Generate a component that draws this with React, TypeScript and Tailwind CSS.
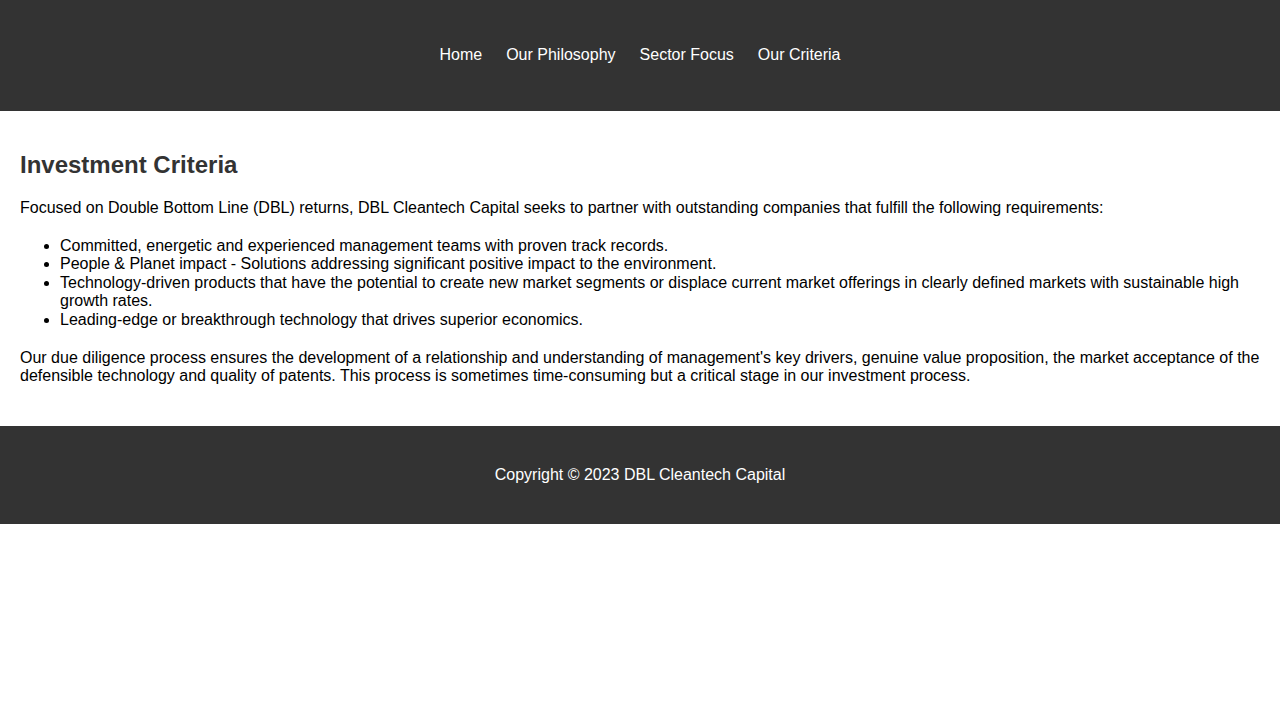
const navLinks = ["Home", "Our Philosophy", "Sector Focus", "Our Criteria"];

const criteria = [
  "Committed, energetic and experienced management teams with proven track records.",
  "People & Planet impact - Solutions addressing significant positive impact to the environment.",
  "Technology-driven products that have the potential to create new market segments or displace current market offerings in clearly defined markets with sustainable high growth rates.",
  "Leading-edge or breakthrough technology that drives superior economics.",
];

const App = () => {
  return (
    <div className="font-['Liberation_Sans',Arial,sans-serif] text-base leading-[1.15] text-black bg-white">
      {/* Header */}
      <header className="bg-[#333333] h-[111px] flex items-center justify-center">
        <nav>
          <ul className="flex gap-6 list-none">
            {navLinks.map((label) => (
              <li key={label}>
                <a href="#" className="text-white no-underline">
                  {label}
                </a>
              </li>
            ))}
          </ul>
        </nav>
      </header>

      {/* Main */}
      <main className="p-5">
        <h2 className="text-2xl font-bold text-[#333333] mt-5 mb-5 leading-[1.15]">
          Investment Criteria
        </h2>
        <p className="mb-5">
          Focused on Double Bottom Line (DBL) returns, DBL Cleantech Capital seeks to partner with
          outstanding companies that fulfill the following requirements:
        </p>
        <ul className="list-disc pl-10 mb-5">
          {criteria.map((item) => (
            <li key={item}>{item}</li>
          ))}
        </ul>
        <p className="mb-5">
          Our due diligence process ensures the development of a relationship and understanding of
          management's key drivers, genuine value proposition, the market acceptance of the
          defensible technology and quality of patents. This process is sometimes time-consuming but
          a critical stage in our investment process.
        </p>
      </main>

      {/* Footer */}
      <footer className="bg-[#333333] py-10 text-center text-white">
        <p>Copyright © 2023 DBL Cleantech Capital</p>
      </footer>
    </div>
  );
};

export default App;
